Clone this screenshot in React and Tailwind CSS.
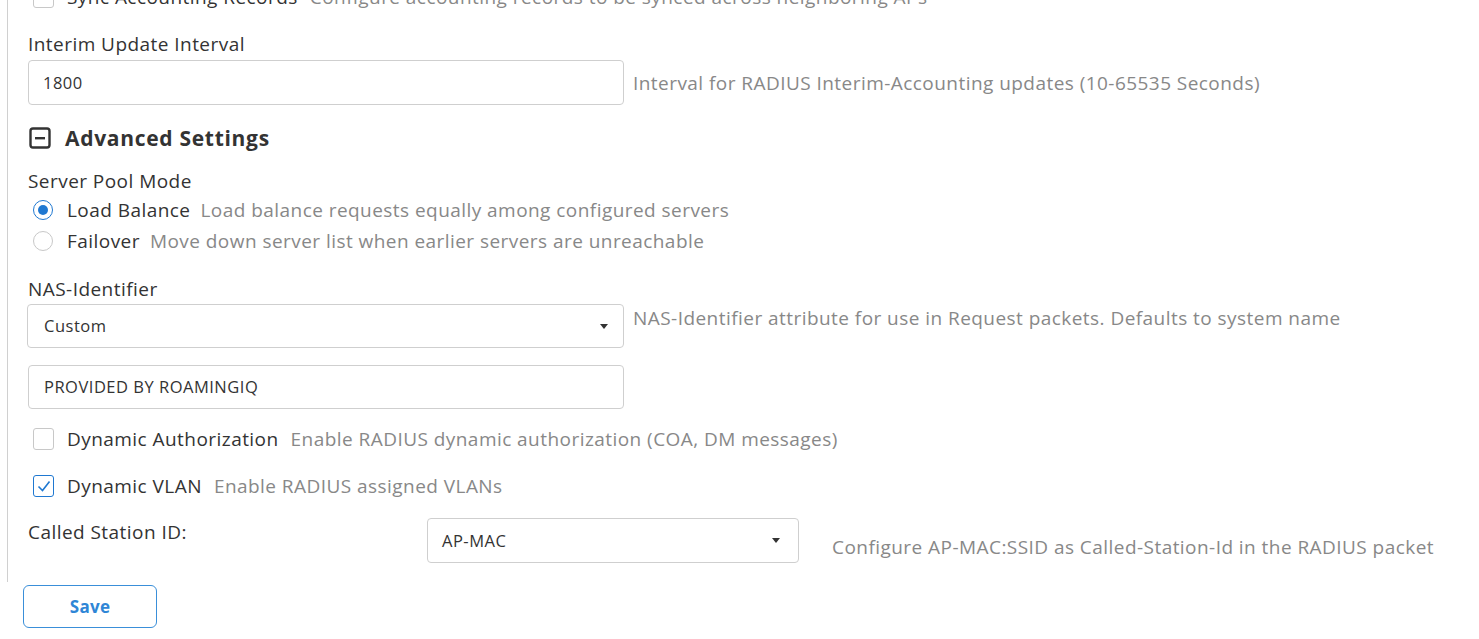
import React from 'react';

const Caret = () => (
  <svg width="8" height="5" viewBox="0 0 8 5" className="shrink-0">
    <path d="M0 0 L8 0 L4 5 Z" fill="#333" />
  </svg>
);

const CheckRow = ({ checked, title, desc }) => (
  <label className="flex items-center h-[22px]">
    <span
      className={
        checked
          ? 'w-[21px] h-[22px] ml-[5px] shrink-0 rounded-[3px] border-[1.5px] border-[#1f78d1] flex items-center justify-center'
          : 'w-[21px] h-[22px] ml-[5px] shrink-0 rounded-[3px] border border-[#c8c8c8]'
      }
    >
      {checked && (
        <svg width="14" height="12" viewBox="0 0 14 12">
          <path d="M1.5 6.5 L5.5 10.5 L12.5 1.5" fill="none" stroke="#1f78d1" strokeWidth="1.6" />
        </svg>
      )}
    </span>
    <span className="ml-[13px] text-[#333] whitespace-nowrap">{title}</span>
    <span className="ml-[12px] text-[#888] whitespace-nowrap">{desc}</span>
  </label>
);

const RadioRow = ({ checked, title, desc }) => (
  <label className="flex items-center h-[22px]">
    <span
      className={
        checked
          ? 'w-[20px] h-[20px] ml-[5px] shrink-0 rounded-full border-[1.5px] border-[#1f78d1] flex items-center justify-center'
          : 'w-[20px] h-[20px] ml-[5px] shrink-0 rounded-full border border-[#c8c8c8]'
      }
    >
      {checked && <span className="w-[10px] h-[10px] rounded-full bg-[#1f78d1]" />}
    </span>
    <span className="ml-[14px] text-[#333] whitespace-nowrap">{title}</span>
    <span className="ml-[10px] text-[#888] whitespace-nowrap">{desc}</span>
  </label>
);

const App = () => {
  return (
    <div className="w-full h-[639px] overflow-hidden bg-white text-[19px] leading-[22px] font-['Open_Sans',sans-serif] tracking-[0.45px]">
      <div className="ml-[7px] border-l border-[#d0d0d0] pl-[20px] h-[582px] flex flex-col">
        <div className="-mt-[14px]">
          <CheckRow
            title="Sync Accounting Records"
            desc="Configure accounting records to be synced across neighboring APs"
          />
        </div>

        <div className="mt-[25px] text-[#333]">Interim Update Interval</div>
        <div className="mt-[5px] flex items-center">
          <div className="w-[596px] shrink-0 h-[45px] border border-[#cfcfcf] rounded-[4px] flex items-center px-[14px] text-[16.5px] tracking-[0.5px] text-[#333]">
            1800
          </div>
          <span className="ml-[9px] text-[#888] whitespace-nowrap">
            Interval for RADIUS Interim-Accounting updates (10-65535 Seconds)
          </span>
        </div>

        <div className="mt-[22px] flex items-center h-[22px]">
          <svg width="22" height="22" viewBox="0 0 22 22" className="ml-[1px]">
            <rect x="1.5" y="1.5" width="19" height="19" rx="2.5" fill="none" stroke="#333" strokeWidth="2.4" />
            <rect x="6" y="10" width="10" height="2.4" fill="#333" />
          </svg>
          <span className="ml-[14px] text-[21px] tracking-[0.7px] font-bold text-[#333]">Advanced Settings</span>
        </div>

        <div className="mt-[21px] text-[#333]">Server Pool Mode</div>
        <div className="mt-[7px]">
          <RadioRow
            checked
            title="Load Balance"
            desc="Load balance requests equally among configured servers"
          />
        </div>
        <div className="mt-[9px]">
          <RadioRow
            title="Failover"
            desc="Move down server list when earlier servers are unreachable"
          />
        </div>

        <div className="mt-[26px] text-[#333]">NAS-Identifier</div>
        <div className="mt-[4px] flex items-start">
          <div className="w-[597px] shrink-0 -ml-px h-[44px] border border-[#cfcfcf] rounded-[4px] flex items-center justify-between pl-[16px] pr-[15px] text-[16.5px] tracking-[0.5px] text-[#333]">
            <span>Custom</span>
            <Caret />
          </div>
          <span className="ml-[9px] mt-[3px] text-[#888] whitespace-nowrap">
            NAS-Identifier attribute for use in Request packets. Defaults to system name
          </span>
        </div>
        <div className="mt-[17px] w-[596px] h-[44px] border border-[#cfcfcf] rounded-[4px] flex items-center px-[15px] text-[16.5px] tracking-[0.5px] text-[#333]">
          PROVIDED BY ROAMINGIQ
        </div>

        <div className="mt-[19px]">
          <CheckRow
            title="Dynamic Authorization"
            desc="Enable RADIUS dynamic authorization (COA, DM messages)"
          />
        </div>
        <div className="mt-[25px]">
          <CheckRow checked title="Dynamic VLAN" desc="Enable RADIUS assigned VLANs" />
        </div>

        <div className="mt-[21px] flex items-start">
          <div className="w-[399px] shrink-0 mt-[3px] text-[#333]">Called Station ID:</div>
          <div className="w-[372px] shrink-0 h-[45px] border border-[#cfcfcf] rounded-[4px] flex items-center justify-between pl-[14px] pr-[18px] text-[16.5px] tracking-[0.5px] text-[#333]">
            <span>AP-MAC</span>
            <Caret />
          </div>
          <span className="ml-[33px] mt-[18px] text-[#888] whitespace-nowrap">
            Configure AP-MAC:SSID as Called-Station-Id in the RADIUS packet
          </span>
        </div>
      </div>

      <div className="mt-[3px] ml-[23px]">
        <button className="w-[134px] h-[43px] border-[1.5px] border-[#3a8fd9] rounded-[6px] text-[17px] tracking-[0.3px] font-bold text-[#2f86d6] bg-white">
          Save
        </button>
      </div>
    </div>
  );
};

export default App;
